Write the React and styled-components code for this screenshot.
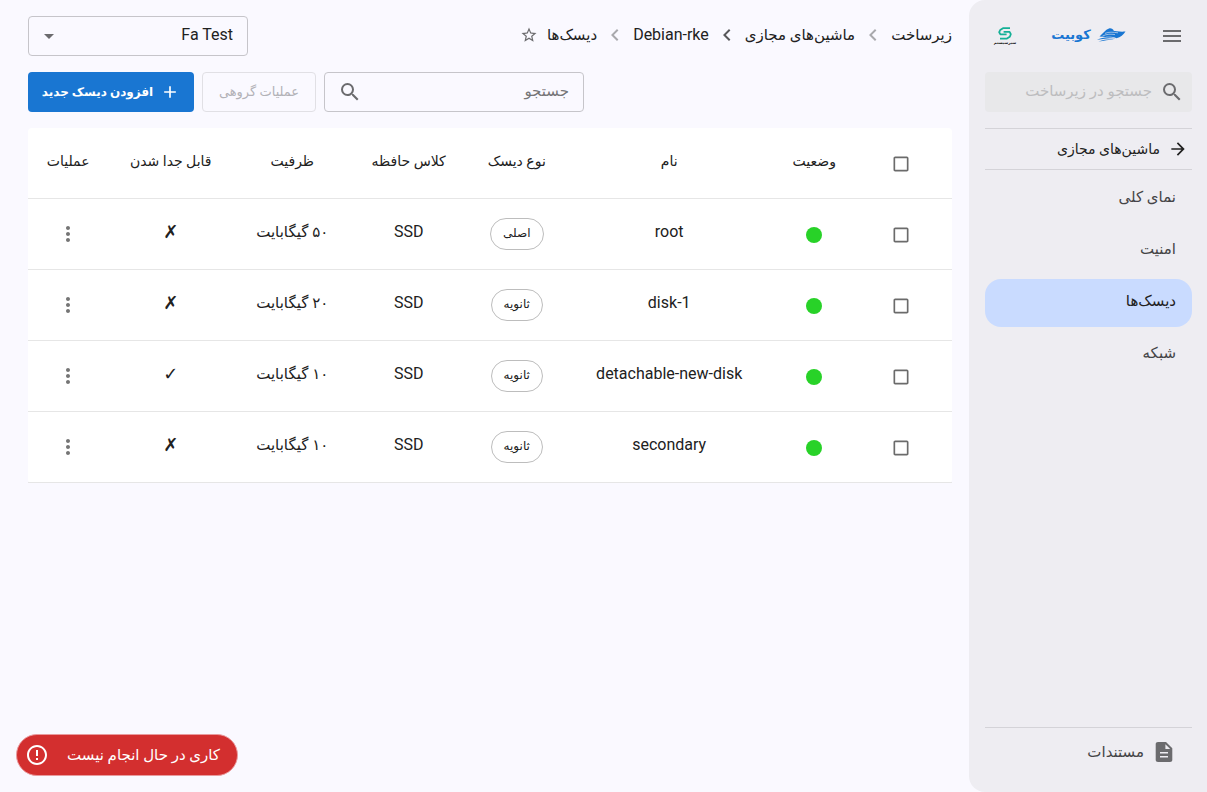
import { useState } from 'react';
import styled, { createGlobalStyle } from 'styled-components';
import {
  MdAdd,
  MdArrowDropDown,
  MdArrowForward,
  MdCheckBox,
  MdCheckBoxOutlineBlank,
  MdChevronLeft,
  MdErrorOutline,
  MdMenu,
  MdMoreVert,
  MdSearch,
  MdStarBorder
} from 'react-icons/md';

const menuItems = ['نمای کلی', 'امنیت', 'دیسک‌ها', 'شبکه'];

const columns = [
  { label: 'وضعیت', width: '9.4%' },
  { label: 'نام', width: '22%' },
  { label: 'نوع دیسک', width: '11%' },
  { label: 'کلاس حافظه', width: '12.4%' },
  { label: 'ظرفیت', width: '12.8%' },
  { label: 'قابل جدا شدن', width: '13.5%' },
  { label: 'عملیات', width: '8.7%' }
];

const disks = [
  { name: 'root', type: 'اصلی', storage: 'SSD', size: '۵۰ گیگابایت' },
  { name: 'disk-1', type: 'ثانویه', storage: 'SSD', size: '۲۰ گیگابایت' },
  {
    name: 'detachable-new-disk',
    type: 'ثانویه',
    storage: 'SSD',
    size: '۱۰ گیگابایت',
    detachable: true
  },
  { name: 'secondary', type: 'ثانویه', storage: 'SSD', size: '۱۰ گیگابایت' }
];

const BoatLogo = () => (
  <svg width="30" height="16" viewBox="0 0 30 16" fill="#1976d2">
    <path d="M3.5 9.5C6.5 6.5 9.5 2.6 13 1.4C14.8 0.8 16.2 1.6 18 3.4L16.5 3.6C20 4.6 24.5 4.8 29.5 4.6C27.5 8 24.5 10.3 20.5 11.2C18 10 14 9.6 9.5 9.9Z" />
    <path d="M1 13C6 10.4 12 9.4 19.5 11.2C13.5 11 7 11.6 1 13Z" />
    <path d="M2.5 14.6C8 12.4 13 11.8 18 12.4C13 12.8 8 13.4 2.5 14.6Z" />
    <path
      d="M9 6.4C13 4.6 17 5.2 22 5.8M6.5 9C11 6.8 15 7 19 7.6"
      fill="none"
      stroke="#eeedf2"
      strokeWidth="0.6"
    />
  </svg>
);

const PartnerMark = () => (
  <svg width="14" height="13" viewBox="0 0 14 13" fill="none">
    <path
      d="M12 1.2H5L2.2 3L1.2 5.2L2.4 7.4H8.6"
      stroke="#14b096"
      strokeWidth="1.8"
      strokeLinejoin="round"
    />
    <path
      d="M2 11.6H9L11.8 9.8L12.8 7.2L11.6 4.8H5.6"
      stroke="#14b096"
      strokeWidth="1.8"
      strokeLinejoin="round"
    />
  </svg>
);

const DocumentIcon = () => (
  <svg width="24" height="24" viewBox="0 0 24 24" fill="#6b6b6e">
    <path
      fillRule="evenodd"
      d="M14 2H6C4.6 2 3.7 2.9 3.7 4V20C3.7 21.1 4.6 22 6 22H18C19.4 22 20.3 21.1 20.3 20V8.3ZM13.4 4.2L18.2 9H13.4ZM8 12H16V13.6H8ZM8 16H16V17.6H8Z"
    />
  </svg>
);

const CheckBox = ({ label }) => {
  const [checked, setChecked] = useState(false);

  return (
    <CheckLabel>
      <input
        type="checkbox"
        aria-label={label}
        checked={checked}
        onChange={event => setChecked(event.target.checked)}
      />
      {checked ? <MdCheckBox size={20} /> : <MdCheckBoxOutlineBlank size={20} />}
    </CheckLabel>
  );
};

const App = () => {
  const [activeItem, setActiveItem] = useState(2);
  const [search, setSearch] = useState('');
  const [menuSearch, setMenuSearch] = useState('');

  const visibleDisks = disks.filter(disk => disk.name.includes(search));

  return (
    <Shell dir="rtl">
      <GlobalStyle />
      <Sidebar>
        <SidebarHeader>
          <IconButton type="button" aria-label="منو">
            <MdMenu size={24} />
          </IconButton>
          <Brand href="#">
            <BoatLogo />
            کوبیت
          </Brand>
          <Partner href="#">
            <PartnerMark />
            <span>سبزسیستم</span>
          </Partner>
        </SidebarHeader>
        <MenuSearch>
          <MdSearch size={24} />
          <input
            aria-label="جستجو در زیرساخت"
            placeholder="جستجو در زیرساخت"
            value={menuSearch}
            onChange={event => setMenuSearch(event.target.value)}
          />
        </MenuSearch>
        <BackLink href="#">
          <MdArrowForward size={20} />
          ماشین‌های مجازی
        </BackLink>
        <Menu>
          {menuItems.map((item, index) => (
            <MenuLink
              key={item}
              href="#"
              $active={index === activeItem}
              onClick={() => setActiveItem(index)}
            >
              {item}
            </MenuLink>
          ))}
        </Menu>
        <DocsLink href="#">
          <DocumentIcon />
          مستندات
        </DocsLink>
      </Sidebar>

      <Main>
        <TopBar>
          <Breadcrumbs>
            <a href="#">زیرساخت</a>
            <Separator />
            <a href="#">ماشین‌های مجازی</a>
            <Separator $dark />
            <LatinLink href="#">Debian-rke</LatinLink>
            <Separator />
            <a href="#">دیسک‌ها</a>
            <StarButton type="button" aria-label="افزودن به علاقه‌مندی‌ها">
              <MdStarBorder size={18} />
            </StarButton>
          </Breadcrumbs>
          <SelectBox>
            <select aria-label="پروژه">
              <option>Fa Test</option>
            </select>
            <MdArrowDropDown size={24} />
          </SelectBox>
        </TopBar>

        <Toolbar>
          <SearchBox>
            <input
              aria-label="جستجو"
              placeholder="جستجو"
              value={search}
              onChange={event => setSearch(event.target.value)}
            />
            <MdSearch size={24} />
          </SearchBox>
          <BulkButton type="button" disabled>
            عملیات گروهی
          </BulkButton>
          <AddButton type="button">
            <MdAdd size={20} />
            افزودن دیسک جدید
          </AddButton>
        </Toolbar>

        <Table>
          <colgroup>
            <col />
            {columns.map(column => (
              <Column key={column.label} $width={column.width} />
            ))}
          </colgroup>
          <thead>
            <tr>
              <HeadCell>
                <CheckBox label="انتخاب همه" />
              </HeadCell>
              {columns.map(column => (
                <HeadCell key={column.label} $text>
                  {column.label}
                </HeadCell>
              ))}
            </tr>
          </thead>
          <tbody>
            {visibleDisks.map(disk => (
              <tr key={disk.name}>
                <Cell>
                  <CheckBox label={disk.name} />
                </Cell>
                <Cell>
                  <Status />
                </Cell>
                <TextCell>{disk.name}</TextCell>
                <Cell>
                  <Chip>{disk.type}</Chip>
                </Cell>
                <TextCell>{disk.storage}</TextCell>
                <SizeCell>{disk.size}</SizeCell>
                <MarkCell>{disk.detachable ? '✓' : '✗'}</MarkCell>
                <Cell>
                  <RowButton type="button" aria-label="عملیات">
                    <MdMoreVert size={24} />
                  </RowButton>
                </Cell>
              </tr>
            ))}
          </tbody>
        </Table>
      </Main>

      <TaskStatus type="button">
        کاری در حال انجام نیست
        <MdErrorOutline size={24} />
      </TaskStatus>
    </Shell>
  );
};

export default App;

const GlobalStyle = createGlobalStyle`
  * {
    box-sizing: border-box;
  }

  body {
    margin: 0;
    background: #faf9ff;
    color: #212121;
    font-family: Roboto, 'DejaVu Sans', sans-serif;
    font-size: 15px;
    line-height: 20px;
  }

  a {
    color: inherit;
    text-decoration: none;
  }

  button,
  input,
  select {
    font: inherit;
    color: inherit;
  }

  button {
    cursor: pointer;
  }

  svg {
    flex: none;
  }
`;

const Shell = styled.div`
  display: flex;
  min-height: 100vh;
`;

const Sidebar = styled.aside`
  position: sticky;
  top: 0;
  display: flex;
  flex: 0 0 238px;
  flex-direction: column;
  min-width: 0;
  height: 100vh;
  padding: 16px 15px 16px 16px;
  border-radius: 16px 0 0 16px;
  background: #eeedf2;
`;

const SidebarHeader = styled.div`
  display: flex;
  align-items: center;
  justify-content: space-between;
  height: 40px;
  margin-bottom: 16px;
`;

const IconButton = styled.button`
  display: flex;
  align-items: center;
  justify-content: center;
  width: 40px;
  height: 40px;
  padding: 0;
  border: 0;
  background: none;
  color: #6b6b6e;
`;

const Brand = styled.a`
  display: flex;
  align-items: center;
  gap: 5px;
  padding-bottom: 2px;
  color: #1976d2;
  font-size: 13px;
  font-weight: bold;
`;

const Partner = styled.a`
  display: flex;
  flex-direction: column;
  align-items: center;
  width: 40px;

  span {
    font-size: 4px;
    font-weight: bold;
    line-height: 6px;
  }
`;

const MenuSearch = styled.label`
  display: flex;
  align-items: center;
  gap: 8px;
  height: 40px;
  margin-bottom: 16px;
  padding: 0 8px;
  border-radius: 4px;
  background: #e8e8ea;
  color: #6b6b6e;

  input {
    flex: 1;
    min-width: 0;
    padding: 0 0 2px;
    border: 0;
    outline: 0;
    background: none;
  }

  input::placeholder {
    color: #bdbdbf;
    opacity: 1;
  }
`;

const BackLink = styled.a`
  display: flex;
  align-items: center;
  gap: 8px;
  height: 42px;
  padding: 0 4px;
  border-top: 1px solid #d4d3d8;
  border-bottom: 1px solid #d4d3d8;
  font-size: 14px;
`;

const Menu = styled.nav`
  display: flex;
  flex: 1;
  flex-direction: column;
  gap: 4px;
  padding-top: 5px;
`;

const MenuLink = styled.a`
  display: flex;
  align-items: center;
  height: 48px;
  padding: 0 16px 4px;
  border-radius: 16px;
  background: ${({ $active }) => ($active ? '#c9dbff' : 'none')};
  color: ${({ $active }) => ($active ? '#212121' : '#444446')};
`;

const DocsLink = styled.a`
  display: flex;
  align-items: center;
  gap: 8px;
  height: 49px;
  padding: 0 16px;
  border-top: 1px solid #d4d3d8;
  color: #444446;
`;

const Main = styled.main`
  display: flex;
  flex: 1;
  flex-direction: column;
  gap: 16px;
  min-width: 0;
  padding: 16px 17px 16px 28px;
`;

const TopBar = styled.div`
  display: flex;
  align-items: center;
  justify-content: space-between;
`;

const Breadcrumbs = styled.nav`
  display: flex;
  align-items: center;
  padding-bottom: 2px;
`;

const LatinLink = styled.a`
  font-size: 16px;
`;

const Separator = styled(MdChevronLeft).attrs({ size: 24 })`
  margin: 0 6px;
  color: ${({ $dark }) => ($dark ? '#58585b' : '#a9a9ad')};
`;

const StarButton = styled.button`
  display: flex;
  margin-right: 9px;
  padding: 0;
  border: 0;
  background: none;
  color: #6b6b6e;
`;

const SelectBox = styled.div`
  position: relative;
  width: 220px;

  select {
    display: block;
    width: 100%;
    height: 40px;
    padding: 0 14px 2px 32px;
    border: 1px solid #c6c5ca;
    border-radius: 4px;
    appearance: none;
    background: none;
    font-size: 16px;
  }

  svg {
    position: absolute;
    top: 8px;
    left: 9px;
    color: #6b6b6e;
    pointer-events: none;
  }
`;

const Toolbar = styled.div`
  display: flex;
  justify-content: flex-end;
  gap: 8px;
`;

const SearchBox = styled.label`
  display: flex;
  align-items: center;
  width: 260px;
  height: 40px;
  padding: 0 14px 0 13px;
  border: 1px solid #c6c5ca;
  border-radius: 4px;
  color: #6b6b6e;

  input {
    flex: 1;
    min-width: 0;
    padding: 0 0 2px;
    border: 0;
    outline: 0;
    background: none;
  }

  input::placeholder {
    color: #757577;
    opacity: 1;
  }
`;

const Button = styled.button`
  display: flex;
  align-items: center;
  justify-content: center;
  height: 40px;
  padding: 0 12px;
  border: 0;
  border-radius: 4px;
`;

const BulkButton = styled(Button)`
  width: 114px;
  border: 1px solid #e1e0e5;
  background: none;
  color: #b3b2b7;
  font-size: 13px;
`;

const AddButton = styled(Button)`
  gap: 7px;
  width: 166px;
  background: #1976d2;
  color: #fff;
  font-size: 12px;
  font-weight: bold;
`;

const Table = styled.table`
  width: 100%;
  border-collapse: separate;
  border-spacing: 0;
  border-radius: 4px;
  background: #fff;
  table-layout: fixed;
`;

const Column = styled.col`
  width: ${({ $width }) => $width};
`;

const HeadCell = styled.th`
  height: 71px;
  padding: 0 0 ${({ $text }) => ($text ? '4px' : '0')};
  border-bottom: 1px solid #e6e6e6;
  font-size: 14px;
  font-weight: normal;
`;

const Cell = styled.td`
  height: 71px;
  padding: 0;
  border-bottom: 1px solid #e6e6e6;
  text-align: center;
`;

const TextCell = styled(Cell)`
  padding-bottom: 4px;
  font-size: 16px;
`;

const SizeCell = styled(TextCell)`
  font-size: 15px;
`;

const MarkCell = styled(TextCell)`
  font-size: 18px;
`;

const CheckLabel = styled.label`
  position: relative;
  display: inline-flex;
  margin-right: 8px;
  color: #6b6b6b;
  vertical-align: middle;

  input {
    position: absolute;
    inset: 0;
    margin: 0;
    opacity: 0;
  }
`;

const Status = styled.span`
  display: inline-block;
  width: 16px;
  height: 16px;
  border-radius: 50%;
  background: #28d228;
  vertical-align: middle;
`;

const Chip = styled.span`
  display: inline-flex;
  align-items: center;
  height: 32px;
  padding: 0 12px 2px;
  border: 1px solid #bdbdbd;
  border-radius: 16px;
  font-size: 12px;
  vertical-align: middle;
`;

const RowButton = styled.button`
  display: inline-flex;
  padding: 0;
  border: 0;
  background: none;
  color: #757575;
  vertical-align: middle;
`;

const TaskStatus = styled.button`
  position: fixed;
  bottom: 16px;
  left: 16px;
  display: flex;
  align-items: center;
  justify-content: space-between;
  width: 222px;
  height: 42px;
  padding: 0 17px 0 8px;
  border: 1px solid #e99a9d;
  border-radius: 21px;
  background: #d32f2f;
  color: #fff;
`;
